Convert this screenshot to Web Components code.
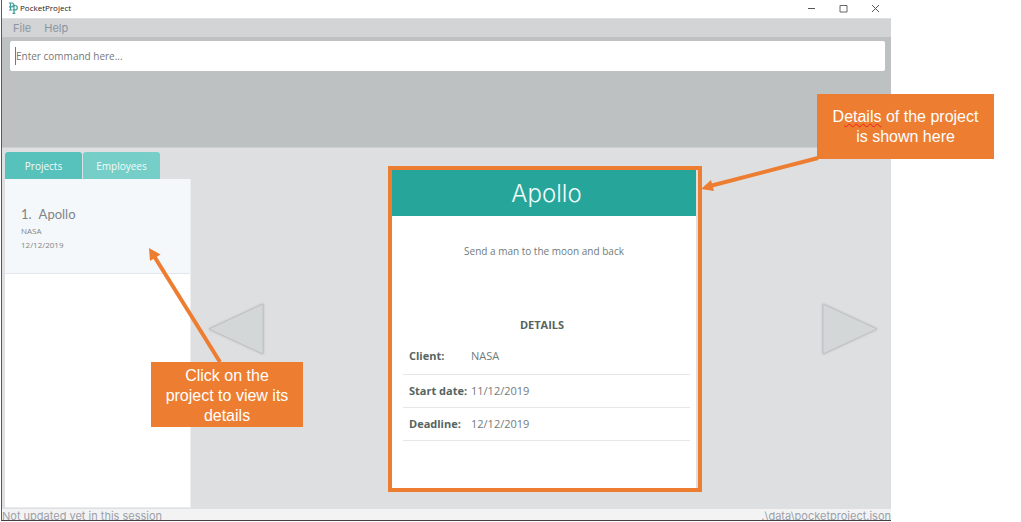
<!DOCTYPE html>
<html lang="en">
<head>
<meta charset="utf-8">
<title>PocketProject</title>
<style>
html, body { margin: 0; background: #fff; }
body { font-family: "Open Sans", "Noto Sans", sans-serif; font-size: 12px; line-height: 16px; color: #6f7b7b; overflow: hidden; }
</style>
</head>
<body>
<pocket-app></pocket-app>

<template id="app-t">
<style>
:host { display: block; box-sizing: border-box; height: 100vh; min-height: 480px; padding: 0 130px 1px 1px; }
.window { display: flex; flex-direction: column; height: 100%; box-sizing: border-box; border-left: 1px solid #854848; border-bottom: 1px solid #423f45; }
main { flex: 1; min-height: 0; display: flex; background: #dedfe1; }
</style>
<div class="window">
  <title-bar>PocketProject</title-bar>
  <menu-bar></menu-bar>
  <command-box></command-box>
  <main>
    <side-panel></side-panel>
    <project-view></project-view>
  </main>
  <status-bar><span>Not updated yet in this session</span><span slot="path">.\data\pocketproject.json</span></status-bar>
</div>
</template>

<template id="title-t">
<style>
:host { display: flex; align-items: center; box-sizing: border-box; height: 18px; padding: 0 0 2px 6px; background: #fff; color: #222; font: 8px/16px "Open Sans", sans-serif; }
.logo { width: 10px; height: 12px; margin-right: 2px; }
.name { flex: 1; }
button { display: flex; align-items: center; justify-content: center; width: 32px; height: 16px; padding: 0; border: 0; background: none; }
</style>
<svg class="logo" viewBox="0 0 10 12" fill="none" stroke="#3d9e98"><path d="M2.5 8V1M.8 1h3.2a1.9 1.9 0 0 1 0 3.800H1M1 8h3.500" stroke-width="1.200"/><path d="M6 11.500V3.500M4.500 3.500h2.600a2.200 2.200 0 0 1 0 4.400H5M4.500 11.300h2.800" stroke-width="1.200"/></svg>
<span class="name"><slot></slot></span>
<button aria-label="Minimize"><svg width="9" height="9"><path d="M1 4.500h7" stroke="#555"/></svg></button>
<button aria-label="Maximize"><svg width="9" height="9"><path d="M1 1.500h7v6.500h-7z" stroke="#666" fill="none"/></svg></button>
<button aria-label="Close"><svg width="9" height="9"><path d="M1 1l7 7M8 1l-7 7" stroke="#555"/></svg></button>
</template>

<template id="menu-t">
<style>
:host { display: flex; align-items: center; gap: 13px; height: 18px; padding-left: 11px; background: #d2d4d5; border-top: 1px solid #dddfe0; }
button { padding: 0; border: 0; background: none; color: #8c94a3; font: 11px/16px Inter, sans-serif; }
</style>
<button>File</button><button>Help</button>
</template>

<template id="command-t">
<style>
:host { display: block; height: 106px; padding: 4px 6px 0 8px; background: #bdc1c1; border-bottom: 1px solid #cdd0d1; }
.field { display: flex; align-items: center; height: 30px; padding-left: 5px; background: #fff; border-radius: 2px; }
.field::before { content: ""; width: 1px; height: 18px; background: #777; }
input { flex: 1; min-width: 0; padding: 0; border: 0; outline: 0; background: none; font: 10px/16px "Open Sans", sans-serif; color: #777; }
input::placeholder { color: #777; opacity: 1; }
</style>
<div class="field"><input aria-label="Command" placeholder="Enter command here..."></div>
</template>

<template id="side-t">
<style>
:host { display: flex; flex-direction: column; width: 186px; padding: 4px 0 1px 3px; flex: none; }
.tabs { display: flex; gap: 1px; }
.tabs button { width: 77px; height: 27px; padding: 0; border: 0; border-radius: 3px 3px 0 0; background: #75cfc8; color: #f2fbfa; font: 10px/16px "Open Sans", sans-serif; }
.tabs button[aria-selected=true] { background: #57c1bb; }
.list { flex: 1; background: #fff; border-bottom: 1px solid #e9edf0; border-right: 1px solid #eceeef; }
</style>
<div class="tabs" role="tablist"><button role="tab" aria-selected="true">Projects</button><button role="tab" aria-selected="false">Employees</button></div>
<div class="list"><project-card>
  <span slot="index">1.</span><span slot="name">Apollo</span><span slot="client">NASA</span><span slot="date">12/12/2019</span>
</project-card></div>
</template>

<template id="card-t">
<style>
:host { display: block; position: relative; box-sizing: border-box; height: 95px; padding: 26px 16px 0; background: #f4f8fb; border-bottom: 1px solid #e4e6ef; color: #808489; }
.head { display: flex; gap: 7px; font: 13px/19px Lato, sans-serif; }
.small { font: 8px/14px "Open Sans", sans-serif; }
call-out { left: 146px; top: 183px; width: 152px; }
svg { position: absolute; left: 140px; top: 66px; z-index: 2; overflow: visible; }
</style>
<div class="head"><slot name="index"></slot><slot name="name"></slot></div>
<div class="small"><slot name="client"></slot></div>
<div class="small"><slot name="date"></slot></div>
<svg width="80" height="120"><path d="M9 11 75 117" stroke="#ed7d31" stroke-width="4"/><path d="M4 3 15.500 9.500 5 16z" fill="#ed7d31"/></svg>
<call-out>Click on the<br>project to view its<br>details</call-out>
</template>

<template id="view-t">
<style>
:host { flex: 1; min-width: 0; display: flex; align-items: center; justify-content: space-between; padding: 0 12px 0 16px; }
.nav { padding: 0; border: 0; background: none; width: 58px; height: 54px; }
.nav svg { display: block; overflow: visible; filter: drop-shadow(0 0 1px #b5b8b9); }
.nav path { fill: #d3d7d8; stroke: #bfc3c4; }
</style>
<button class="nav" aria-label="Previous project"><svg width="58" height="54"><path d="M2 27 56 2V52z"/></svg></button>
<project-details></project-details>
<button class="nav" aria-label="Next project"><svg width="58" height="54"><path d="M56 27 2 2V52z"/></svg></button>
</template>

<template id="details-t">
<style>
:host { display: block; position: relative; box-sizing: border-box; width: 314px; height: 326px; border: 4px solid #ed7d31; background: #dedfe1; margin-left: 4px; }
article { height: 100%; margin-right: 2px; background: #fff; }
h1 { margin: 0; height: 46px; padding-left: 5px; background: #26a69a; color: #f2fbfa; font: 300 24px/48px Inter, sans-serif; text-align: center; }
p { margin: 27px 0 0; font-size: 10px; line-height: 16px; text-align: center; }
h2 { margin: 57px 0 0; padding-right: 4px; font: bold 11px/18px "Open Sans", sans-serif; text-align: center; color: #56645f; }
table { width: calc(100% - 17px); margin: 5px 6px 0 11px; border-collapse: collapse; font-size: 11px; line-height: 16px; }
tr { height: 33px; }
tr:first-child { height: 36px; }
th, td { padding: 0; text-align: left; border-bottom: 1px solid #e6e8e8; }
th { width: 62px; padding-left: 6px; color: #56645f; font-weight: bold; }
svg { position: absolute; left: 308px; top: -16px; overflow: visible; }
call-out { left: 425px; top: -76px; width: 177px; }
.typo { text-decoration: underline wavy #e8231c 1px; text-underline-offset: 1px; text-decoration-skip-ink: none; }
</style>
<article>
<h1>Apollo</h1>
<p>Send a man to the moon and back</p>
<h2>DETAILS</h2>
<table>
<tr><th scope="row">Client:</th><td>NASA</td></tr>
<tr><th scope="row">Start date:</th><td>11/12/2019</td></tr>
<tr><th scope="row">Deadline:</th><td>12/12/2019</td></tr>
</table>
</article>
<svg width="120" height="40"><path d="M10 32 118 4" stroke="#ed7d31" stroke-width="4"/><path d="M1 35 11 26 14 37z" fill="#ed7d31"/></svg>
<call-out>D<span class="typo">etails</span> of the project<br>is shown here</call-out>
</template>

<template id="callout-t">
<style>
:host { position: absolute; z-index: 2; display: flex; align-items: center; justify-content: center; box-sizing: border-box; height: 65px; padding-top: 2px; background: #ed7d31; color: #fff; font: 16px/20px "Liberation Sans Narrow", "Arial Narrow", "Liberation Sans", sans-serif; text-align: center; white-space: nowrap; }
</style>
<div><slot></slot></div>
</template>

<template id="status-t">
<style>
:host { display: flex; justify-content: space-between; height: 11px; background: #f3f3f3; color: #9ba1ab; font: 11px/14px Inter, sans-serif; overflow: hidden; white-space: nowrap; }
</style>
<slot></slot><slot name="path"></slot>
</template>

<script>
class TemplateElement extends HTMLElement {
  constructor() {
    super();
    const t = document.getElementById(this.constructor.template);
    this.attachShadow({ mode: "open" }).append(t.content.cloneNode(true));
  }
}
const parts = {
  "call-out": "callout-t",
  "title-bar": "title-t",
  "menu-bar": "menu-t",
  "command-box": "command-t",
  "project-card": "card-t",
  "side-panel": "side-t",
  "project-details": "details-t",
  "project-view": "view-t",
  "status-bar": "status-t",
  "pocket-app": "app-t"
};
for (const [tag, id] of Object.entries(parts)) {
  customElements.define(tag, class extends TemplateElement { static template = id; });
}
</script>
</body>
</html>
